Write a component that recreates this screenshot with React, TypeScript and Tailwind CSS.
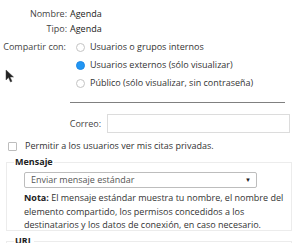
import React from 'react';

const font = { fontFamily: '"Open Sans", "Noto Sans", sans-serif' };

function Radio({ checked }: { checked?: boolean }) {
  return checked ? (
    <span className="w-[9px] h-[9px] rounded-full bg-[#2196f3] border border-[#1e88e5] shrink-0" />
  ) : (
    <span className="w-[9px] h-[9px] rounded-full bg-white border border-[#c4c4c4] shrink-0" />
  );
}

export default function App() {
  return (
    <div className="w-[300px] h-[243px] bg-white overflow-hidden relative text-[9px] text-[#333]" style={font}>
      {/* mouse pointer */}
      <svg className="absolute left-[5px] top-[69px]" width="9" height="14" viewBox="0 0 9 14">
        <path d="M1 1 L1 11 L3.5 8.5 L5.5 13 L7 12.3 L5 8 L8.5 8 Z" fill="#222" stroke="#444" strokeWidth="0.5" />
      </svg>

      {/* details */}
      <div className="pt-[7px] grid grid-cols-[67px_1fr] gap-x-[3px] gap-y-[1px] leading-[14px]">
        <span className="text-right text-[#444]">Nombre:</span>
        <span className="text-[#222]">Agenda</span>
        <span className="text-right text-[#444]">Tipo:</span>
        <span className="text-[#222]">Agenda</span>
      </div>

      <div className="mt-[4px] flex">
        <span className="w-[66px] text-right leading-[14px] whitespace-nowrap text-[#444]">Compartir con:</span>
        <div className="ml-[10px] flex flex-col gap-[4px]">
          <label className="flex items-center gap-[5px] leading-[14px]">
            <Radio /> Usuarios o grupos internos
          </label>
          <label className="flex items-center gap-[5px] leading-[14px]">
            <Radio checked /> Usuarios externos (sólo visualizar)
          </label>
          <label className="flex items-center gap-[5px] leading-[14px]">
            <Radio /> Público (sólo visualizar, sin contraseña)
          </label>
        </div>
      </div>

      <div className="ml-[70px] mr-[15px] mt-[12px] h-px bg-[#808080]" />

      <div className="mt-[11px] flex items-center">
        <span className="w-[101px] text-right leading-[14px] text-[#444]">Correo:</span>
        <input className="ml-[6px] w-[183px] h-[19px] border border-[#dcdcdc] bg-white outline-none" />
      </div>

      <label className="mt-[6px] ml-[8px] flex items-center gap-[8px] leading-[14px]">
        <span className="w-[9px] h-[9px] border border-[#bdbdbd] rounded-[1px] bg-white shrink-0" />
        Permitir a los usuarios ver mis citas privadas.
      </label>

      <fieldset className="mt-[3px] ml-[6px] w-[286px] h-[75px] border border-[#ececec] pl-[17px] pr-[4px]">
        <legend className="ml-[-10px] px-[1px] font-bold text-[#222] leading-[12px]">Mensaje</legend>
        <div className="mt-[4px] w-[233px] h-[16px] border border-[#bdbdbd] rounded-[2px] flex items-center justify-between pl-[6px] pr-[5px]">
          <span className="text-[#555] leading-[14px]">Enviar mensaje estándar</span>
          <span className="text-[6px] text-[#222]">▼</span>
        </div>
        <p className="mt-[3px] leading-[13.5px] text-[#333] whitespace-nowrap">
          <b className="text-[#222]">Nota:</b> El mensaje estándar muestra tu nombre, el nombre del
          <br />
          elemento compartido, los permisos concedidos a los
          <br />
          destinatarios y los datos de conexión, en caso necesario.
        </p>
      </fieldset>

      <fieldset className="mt-[4px] ml-[6px] w-[286px] h-[20px] border border-[#ececec] pl-[17px]">
        <legend className="ml-[-10px] px-[1px] font-bold text-[#222] leading-[12px]">URL</legend>
      </fieldset>
    </div>
  );
}
